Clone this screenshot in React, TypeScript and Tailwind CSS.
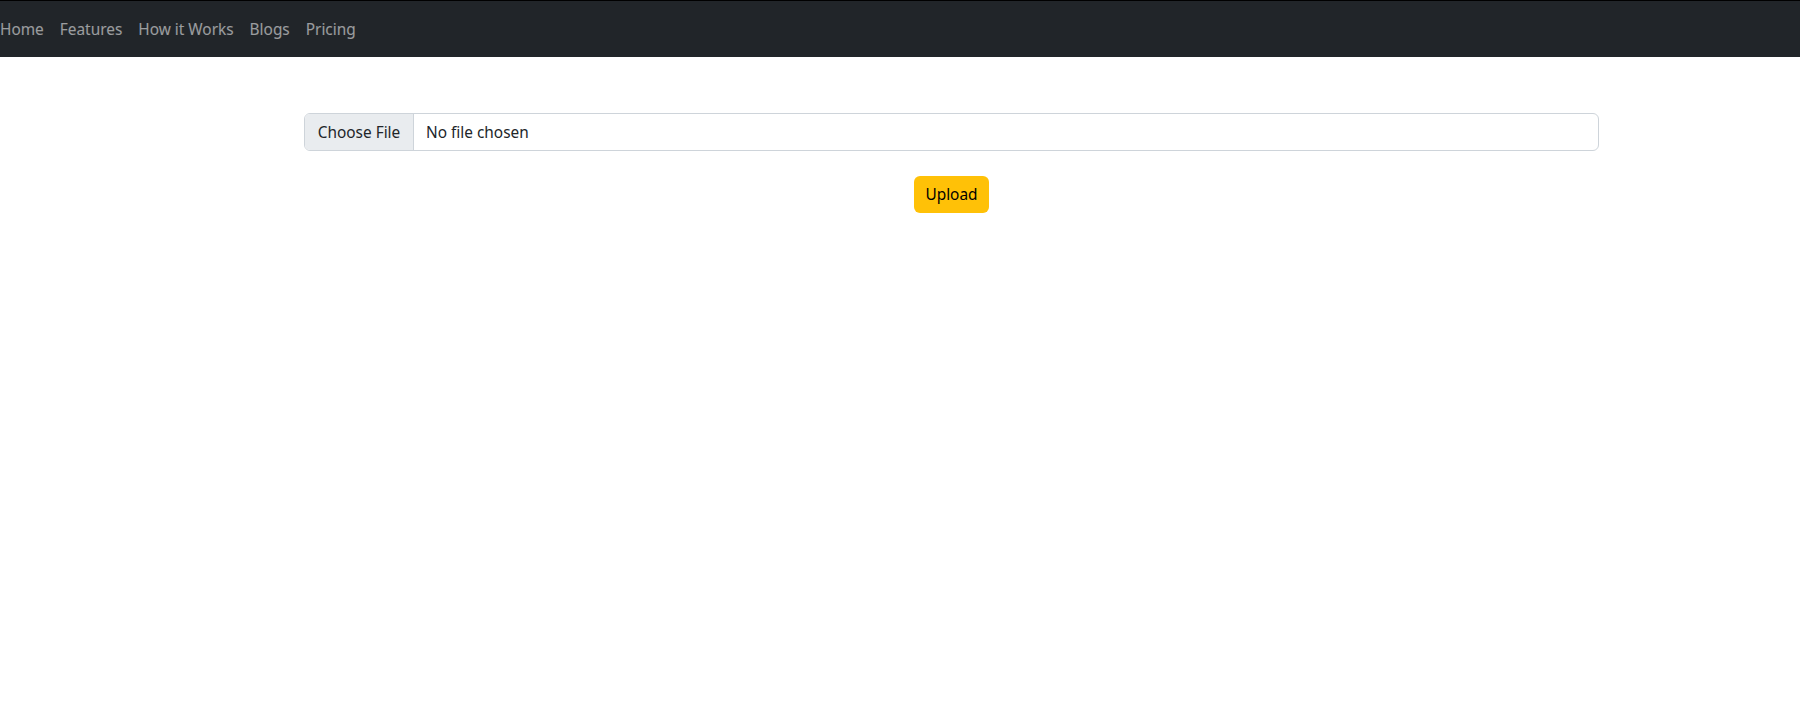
const links = ["Home", "Features", "How it Works", "Blogs", "Pricing"]

export default function App() {
  return (
    <div className="min-h-screen bg-white font-['Noto_Sans',sans-serif] text-[15.4px] text-[#212529]">
      <nav className="flex h-[57px] items-center gap-4 border-t border-black bg-[#212529] pt-[2px]">
        {links.map((label) => (
          <a key={label} href="#" className="text-white/55 hover:text-white/75">
            {label}
          </a>
        ))}
      </nav>

      <form className="ml-[304px] w-[1295px] pt-[56px]" onSubmit={(e) => e.preventDefault()}>
        <label className="flex h-[38px] cursor-pointer overflow-hidden rounded-md border border-[#ced4da] pt-px">
          <span className="-mt-px flex w-[109px] items-center justify-center border-r border-[#ced4da] bg-[#e9ecef] pt-px">
            Choose File
          </span>
          <span className="flex items-center px-3">No file chosen</span>
          <input type="file" className="hidden" />
        </label>
        <div className="mt-[25px] flex justify-center">
          <button type="submit" className="h-[37px] w-[75px] rounded-md bg-[#ffc107] pt-px text-black">
            Upload
          </button>
        </div>
      </form>
    </div>
  )
}
